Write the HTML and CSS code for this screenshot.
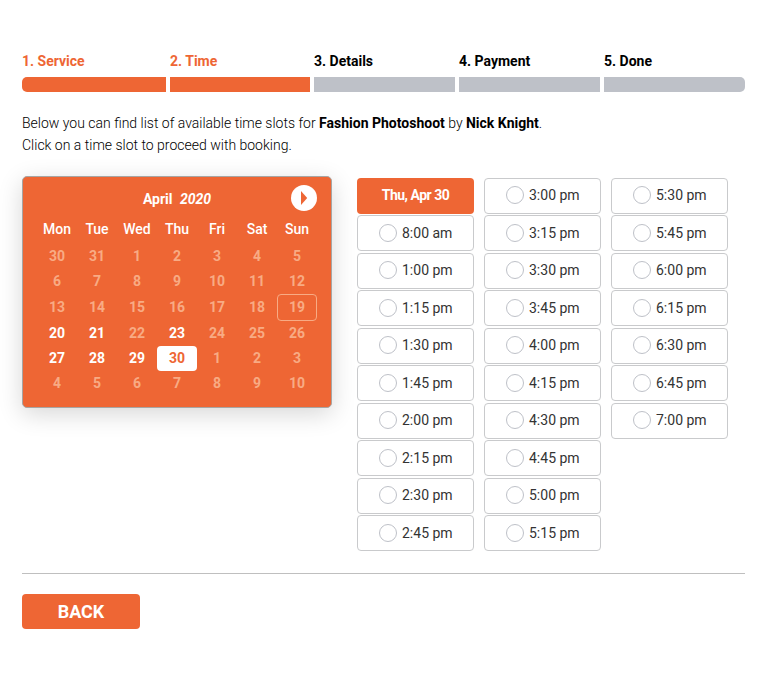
FILE: index.html
```html
<!DOCTYPE html>
<html lang="en">
<head>
<meta charset="utf-8">
<title>Booking</title>
<link rel="stylesheet" href="styles.css">
</head>
<body>
<main class="booking">
  <ol class="steps">
    <li class="step active">1. Service</li>
    <li class="step active">2. Time</li>
    <li class="step">3. Details</li>
    <li class="step">4. Payment</li>
    <li class="step">5. Done</li>
  </ol>
  <p class="intro">Below you can find list of available time slots for <b>Fashion Photoshoot</b> by <b>Nick Knight</b>.<br>Click on a time slot to proceed with booking.</p>
  <div class="picker">
    <section class="calendar">
      <header class="cal-head">
        <span class="cal-title">April <i>2020</i></span>
        <button class="next" aria-label="Next month"><svg width="26" height="26" viewBox="0 0 26 26"><circle cx="13" cy="13" r="13" fill="#fff"/><path d="M10 6v14l6.200-7z" fill="#ee6634"/></svg></button>
      </header>
      <div class="week names"><span>Mon</span><span>Tue</span><span>Wed</span><span>Thu</span><span>Fri</span><span>Sat</span><span>Sun</span></div>
      <div class="week"><span>30</span><span>31</span><span>1</span><span>2</span><span>3</span><span>4</span><span>5</span></div>
      <div class="week"><span>6</span><span>7</span><span>8</span><span>9</span><span>10</span><span>11</span><span>12</span></div>
      <div class="week current"><span>13</span><span>14</span><span>15</span><span>16</span><span>17</span><span>18</span><span class="today">19</span></div>
      <div class="week"><span class="open">20</span><span class="open">21</span><span>22</span><span class="open">23</span><span>24</span><span>25</span><span>26</span></div>
      <div class="week"><span class="open">27</span><span class="open">28</span><span class="open">29</span><span class="selected">30</span><span>1</span><span>2</span><span>3</span></div>
      <div class="week"><span>4</span><span>5</span><span>6</span><span>7</span><span>8</span><span>9</span><span>10</span></div>
    </section>
    <section class="slots">
      <div class="column">
        <div class="day">Thu, Apr 30</div>
        <div class="slot"><i></i>8:00 am</div>
        <div class="slot"><i></i>1:00 pm</div>
        <div class="slot"><i></i>1:15 pm</div>
        <div class="slot"><i></i>1:30 pm</div>
        <div class="slot"><i></i>1:45 pm</div>
        <div class="slot"><i></i>2:00 pm</div>
        <div class="slot"><i></i>2:15 pm</div>
        <div class="slot"><i></i>2:30 pm</div>
        <div class="slot"><i></i>2:45 pm</div>
      </div>
      <div class="column">
        <div class="slot"><i></i>3:00 pm</div>
        <div class="slot"><i></i>3:15 pm</div>
        <div class="slot"><i></i>3:30 pm</div>
        <div class="slot"><i></i>3:45 pm</div>
        <div class="slot"><i></i>4:00 pm</div>
        <div class="slot"><i></i>4:15 pm</div>
        <div class="slot"><i></i>4:30 pm</div>
        <div class="slot"><i></i>4:45 pm</div>
        <div class="slot"><i></i>5:00 pm</div>
        <div class="slot"><i></i>5:15 pm</div>
      </div>
      <div class="column">
        <div class="slot"><i></i>5:30 pm</div>
        <div class="slot"><i></i>5:45 pm</div>
        <div class="slot"><i></i>6:00 pm</div>
        <div class="slot"><i></i>6:15 pm</div>
        <div class="slot"><i></i>6:30 pm</div>
        <div class="slot"><i></i>6:45 pm</div>
        <div class="slot"><i></i>7:00 pm</div>
      </div>
    </section>
  </div>
  <footer class="actions"><button class="back">BACK</button></footer>
</main>
</body>
</html>
```
FILE: styles.css
```css
* { box-sizing: border-box; }
body {
  margin: 0;
  background: #fff;
  color: #000;
  font: 14px/22px Roboto, sans-serif;
}
button { border: 0; padding: 0; font-family: inherit; }
.booking { padding: 50px 22px 0; }
.steps {
  display: grid;
  grid-template-columns: 144px 140px 141px 141px 141px;
  column-gap: 4px;
  margin: 0;
  padding: 0;
  list-style: none;
}
.step { font-weight: 700; }
.step::after {
  content: "";
  display: block;
  height: 15px;
  margin-top: 5px;
  background: #bec1c8;
}
.step.active { color: #ee6634; }
.step.active::after { background: #ee6634; }
.step:first-child::after { border-radius: 5px 0 0 5px; }
.step:last-child::after { border-radius: 0 5px 5px 0; }
.intro { margin: 20px 0 0; font-weight: 300; }
.intro b { font-weight: 700; }
.picker { display: flex; align-items: flex-start; margin-top: 20px; }
.calendar {
  width: 310px;
  height: 232px;
  padding: 0 14px;
  border: 1px solid #a7a5a3;
  border-radius: 5px;
  background: #ee6634;
  box-shadow: 0 6px 24px rgba(0, 0, 0, .16);
  color: #fff;
}
.cal-head {
  display: grid;
  grid-template-columns: 26px 1fr 26px;
  align-items: center;
  height: 42px;
}
.cal-title { grid-column: 2; padding-top: 2px; text-align: center; font-weight: 700; }
.cal-title i { margin-left: 4px; }
.next { display: block; width: 26px; height: 26px; background: none; }
.next svg { display: block; }
.week {
  display: grid;
  grid-template-columns: repeat(7, 40px);
  height: 25px;
  line-height: 25px;
  text-align: center;
  font-weight: 700;
  color: #f8ab84;
}
.names { height: 25px; line-height: 21px; font-weight: 500; color: #fff; }
.current { height: 27px; line-height: 27px; }
.today { border: 1px solid #f8ab84; border-radius: 4px; line-height: 25px; }
.open { color: #fff; }
.selected { border-radius: 4px; background: #fff; color: #ee6634; }
.slots { display: flex; gap: 10px; margin: 1.5px 0 0 25px; }
.column { display: flex; flex-direction: column; gap: 1.5px; width: 117px; }
.slot, .day {
  display: flex;
  align-items: center;
  height: 36px;
  padding-bottom: .2px;
  border-radius: 4px;
}
.day {
  justify-content: center;
  background: #ee6634;
  color: #fff;
  font-weight: 700;
  letter-spacing: -.5px;
}
.slot { padding-left: 21px; border: 1px solid #c9cacc; color: #333; }
.slot i {
  width: 18px;
  height: 18px;
  margin-right: 5px;
  border: 1px solid #bec1c8;
  border-radius: 50%;
}
.actions { margin-top: 22px; padding-top: 20px; border-top: 1px solid #bfbfbf; }
.back {
  display: block;
  width: 118px;
  height: 35px;
  border-radius: 4px;
  background: #ee6634;
  color: #fff;
  font-size: 18px;
  font-weight: 700;
}
```
